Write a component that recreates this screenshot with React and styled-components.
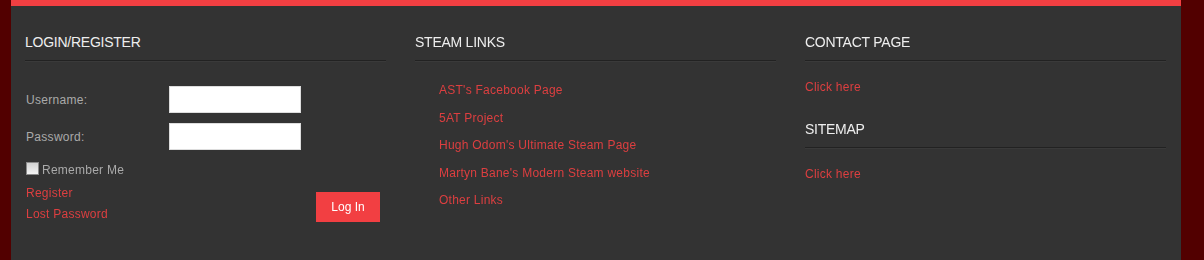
import styled, { createGlobalStyle } from 'styled-components';

const GlobalStyle = createGlobalStyle`
  html, body {
    margin: 0;
    padding: 0;
    background: #520000;
    font-family: "Liberation Sans", Arial, sans-serif;
  }
  #root {
    height: 260px;
  }
`;

const Footer = styled.footer`
  width: 1170px;
  height: 260px;
  margin-left: 11px;
  box-sizing: border-box;
  background: #333333;
  border-top: 6px solid #f23f42;
  display: grid;
  grid-template-columns: repeat(3, 390px);
`;

const Column = styled.div`
  padding: 26px 15px 0 14px;
`;

const Heading = styled.h3`
  margin: 0;
  font-size: 14px;
  font-weight: normal;
  line-height: 20px;
  letter-spacing: -0.25px;
  color: #eeeeee;
  text-transform: uppercase;
  padding-bottom: 8px;
  border-bottom: 1px solid #222222;
  box-shadow: 0 1px 0 #3a3a3a;
  margin-top: ${({ $gap }) => $gap || 0}px;
`;

const Form = styled.form`
  padding: 25px 0 0 1px;
`;

const FieldRow = styled.div`
  display: flex;
  align-items: center;
  margin-bottom: 10px;
`;

const Label = styled.label`
  width: 143px;
  font-size: 12px;
  letter-spacing: 0.3px;
  color: #aaaaaa;
`;

const Input = styled.input`
  width: 132px;
  height: 27px;
  box-sizing: border-box;
  border: 1px solid #dddddd;
  background: #ffffff;
  padding: 0 5px;
  font-size: 12px;
  outline: none;
  caret-color: #000;
`;

const RememberRow = styled.label`
  display: flex;
  align-items: center;
  height: 20px;
  margin-top: 2px;
  font-size: 12px;
  letter-spacing: 0.25px;
  color: #aaaaaa;
`;

const Check = styled.input`
  appearance: none;
  width: 13px;
  height: 13px;
  margin: -4px 3px 0 0;
  border: 1px solid #8a8a8a;
  background: linear-gradient(#d2d2d2, #f4f4f4);
  box-sizing: border-box;
`;

const BottomRow = styled.div`
  display: flex;
  justify-content: space-between;
  align-items: flex-start;
  padding-top: 3px;
  padding-right: 6px;
`;

const LinkStack = styled.div`
  display: flex;
  flex-direction: column;
`;

const RedLink = styled.a`
  font-size: 12px;
  line-height: ${({ $lh }) => ($lh ? `${$lh}px` : '21px')};
  letter-spacing: 0.25px;
  color: #dd3f40;
  text-decoration: none;
  cursor: pointer;
`;

const LoginButton = styled.button`
  width: 64px;
  height: 30px;
  margin-top: 9px;
  border: none;
  background: #f23f42;
  color: #ffffff;
  font-family: inherit;
  font-size: 12px;
  cursor: pointer;
`;

const LinkList = styled.ul`
  list-style: none;
  margin: 16px 0 0;
  padding-left: 24px;
`;

const LinkItem = styled.li`
  font-size: 12px;
  line-height: 27.5px;
`;

const Block = styled.div`
  margin-top: 17px;
  font-size: 12px;
  line-height: 18px;
`;

const steamLinks = [
  "AST's Facebook Page",
  '5AT Project',
  "Hugh Odom's Ultimate Steam Page",
  "Martyn Bane's Modern Steam website",
  'Other Links',
];

export default function App() {
  return (
    <>
      <GlobalStyle />
      <Footer>
        <Column>
          <Heading>Login/Register</Heading>
          <Form onSubmit={(e) => e.preventDefault()}>
            <FieldRow>
              <Label htmlFor="user">Username:</Label>
              <Input id="user" type="text" />
            </FieldRow>
            <FieldRow>
              <Label htmlFor="pass">Password:</Label>
              <Input id="pass" type="password" autoFocus />
            </FieldRow>
            <RememberRow>
              <Check type="checkbox" />
              Remember Me
            </RememberRow>
            <BottomRow>
              <LinkStack>
                <RedLink>Register</RedLink>
                <RedLink>Lost Password</RedLink>
              </LinkStack>
              <LoginButton type="submit">Log In</LoginButton>
            </BottomRow>
          </Form>
        </Column>
        <Column>
          <Heading>Steam Links</Heading>
          <LinkList>
            {steamLinks.map((l) => (
              <LinkItem key={l}>
                <RedLink $lh={27.5}>{l}</RedLink>
              </LinkItem>
            ))}
          </LinkList>
        </Column>
        <Column>
          <Heading>Contact Page</Heading>
          <Block>
            <RedLink $lh={18}>Click here</RedLink>
          </Block>
          <Heading $gap={23}>Sitemap</Heading>
          <Block>
            <RedLink $lh={18}>Click here</RedLink>
          </Block>
        </Column>
      </Footer>
    </>
  );
}
